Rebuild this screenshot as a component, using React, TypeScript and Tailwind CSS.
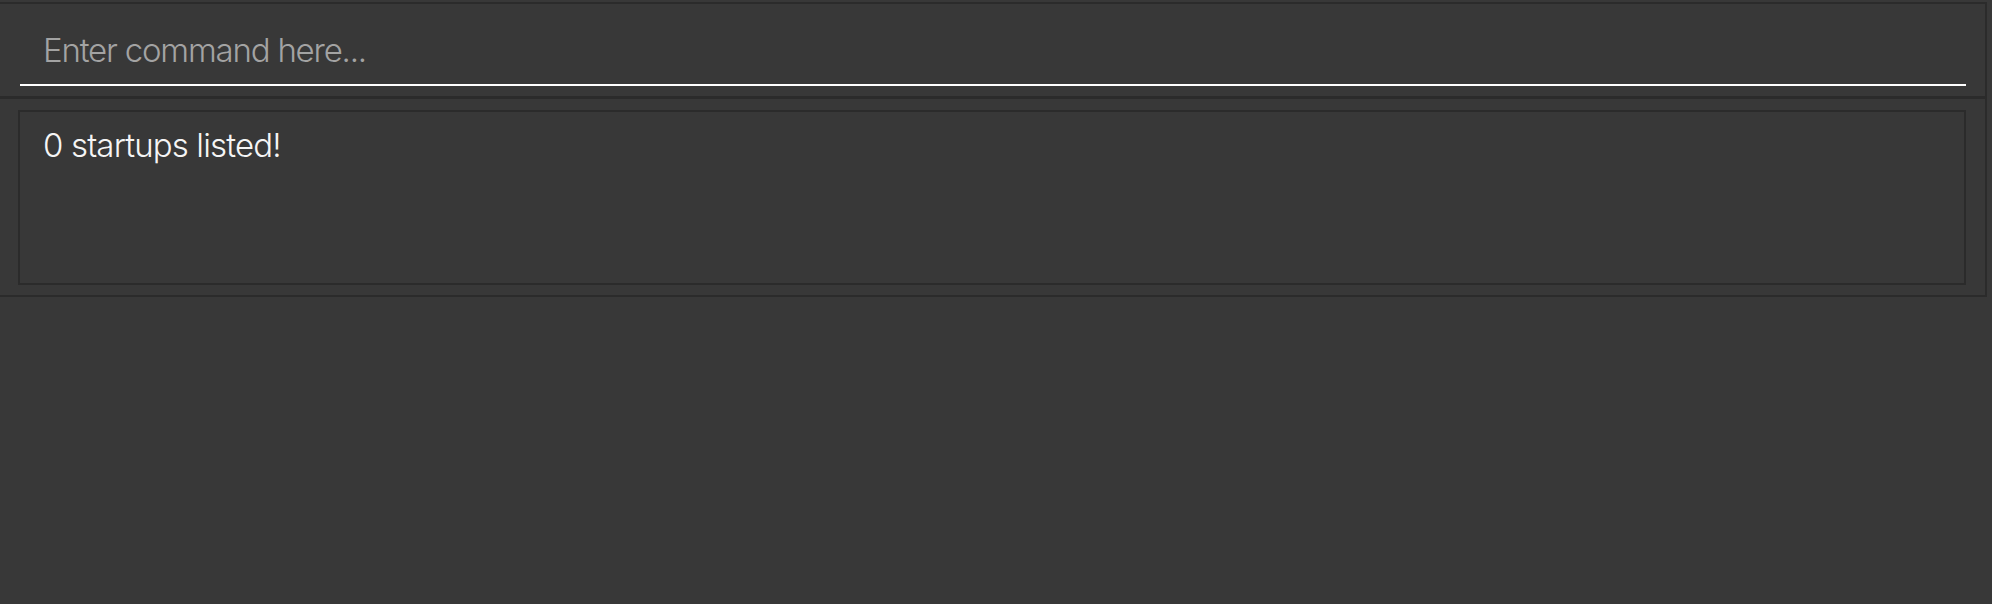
import { useState } from "react";

export default function App() {
  const [command, setCommand] = useState("");

  return (
    <div className="min-h-screen w-full bg-[#383838] pt-[2px] font-['Inter','Noto_Sans',sans-serif]">
      <div className="w-[1987px] border-t-2 border-r-2 border-b-2 border-[#2b2b2b]">
        {/* Command box */}
        <div className="h-[95px] border-b-[3px] border-[#2b2b2b] pl-[20px] pr-[19px] pt-[26px]">
          <input
            value={command}
            onChange={(e) => setCommand(e.target.value)}
            placeholder="Enter command here..."
            className="block h-[56px] w-full border-b-2 border-white bg-transparent pb-[14px] pl-[23px] text-[33px] font-[350] leading-[40px] tracking-[-1.2px] text-white outline-none placeholder:text-[#a3a3a3]"
          />
        </div>

        {/* Result display */}
        <div className="pb-[10px] pl-[18px] pr-[19px] pt-[11px]">
          <div className="h-[175px] border-2 border-[#2b2b2b] px-[23px] pt-[13px]">
            <p className="text-[33px] font-[350] leading-[40px] tracking-[-0.85px] text-[#f5f5f5]">0 startups listed!</p>
          </div>
        </div>
      </div>
    </div>
  );
}
